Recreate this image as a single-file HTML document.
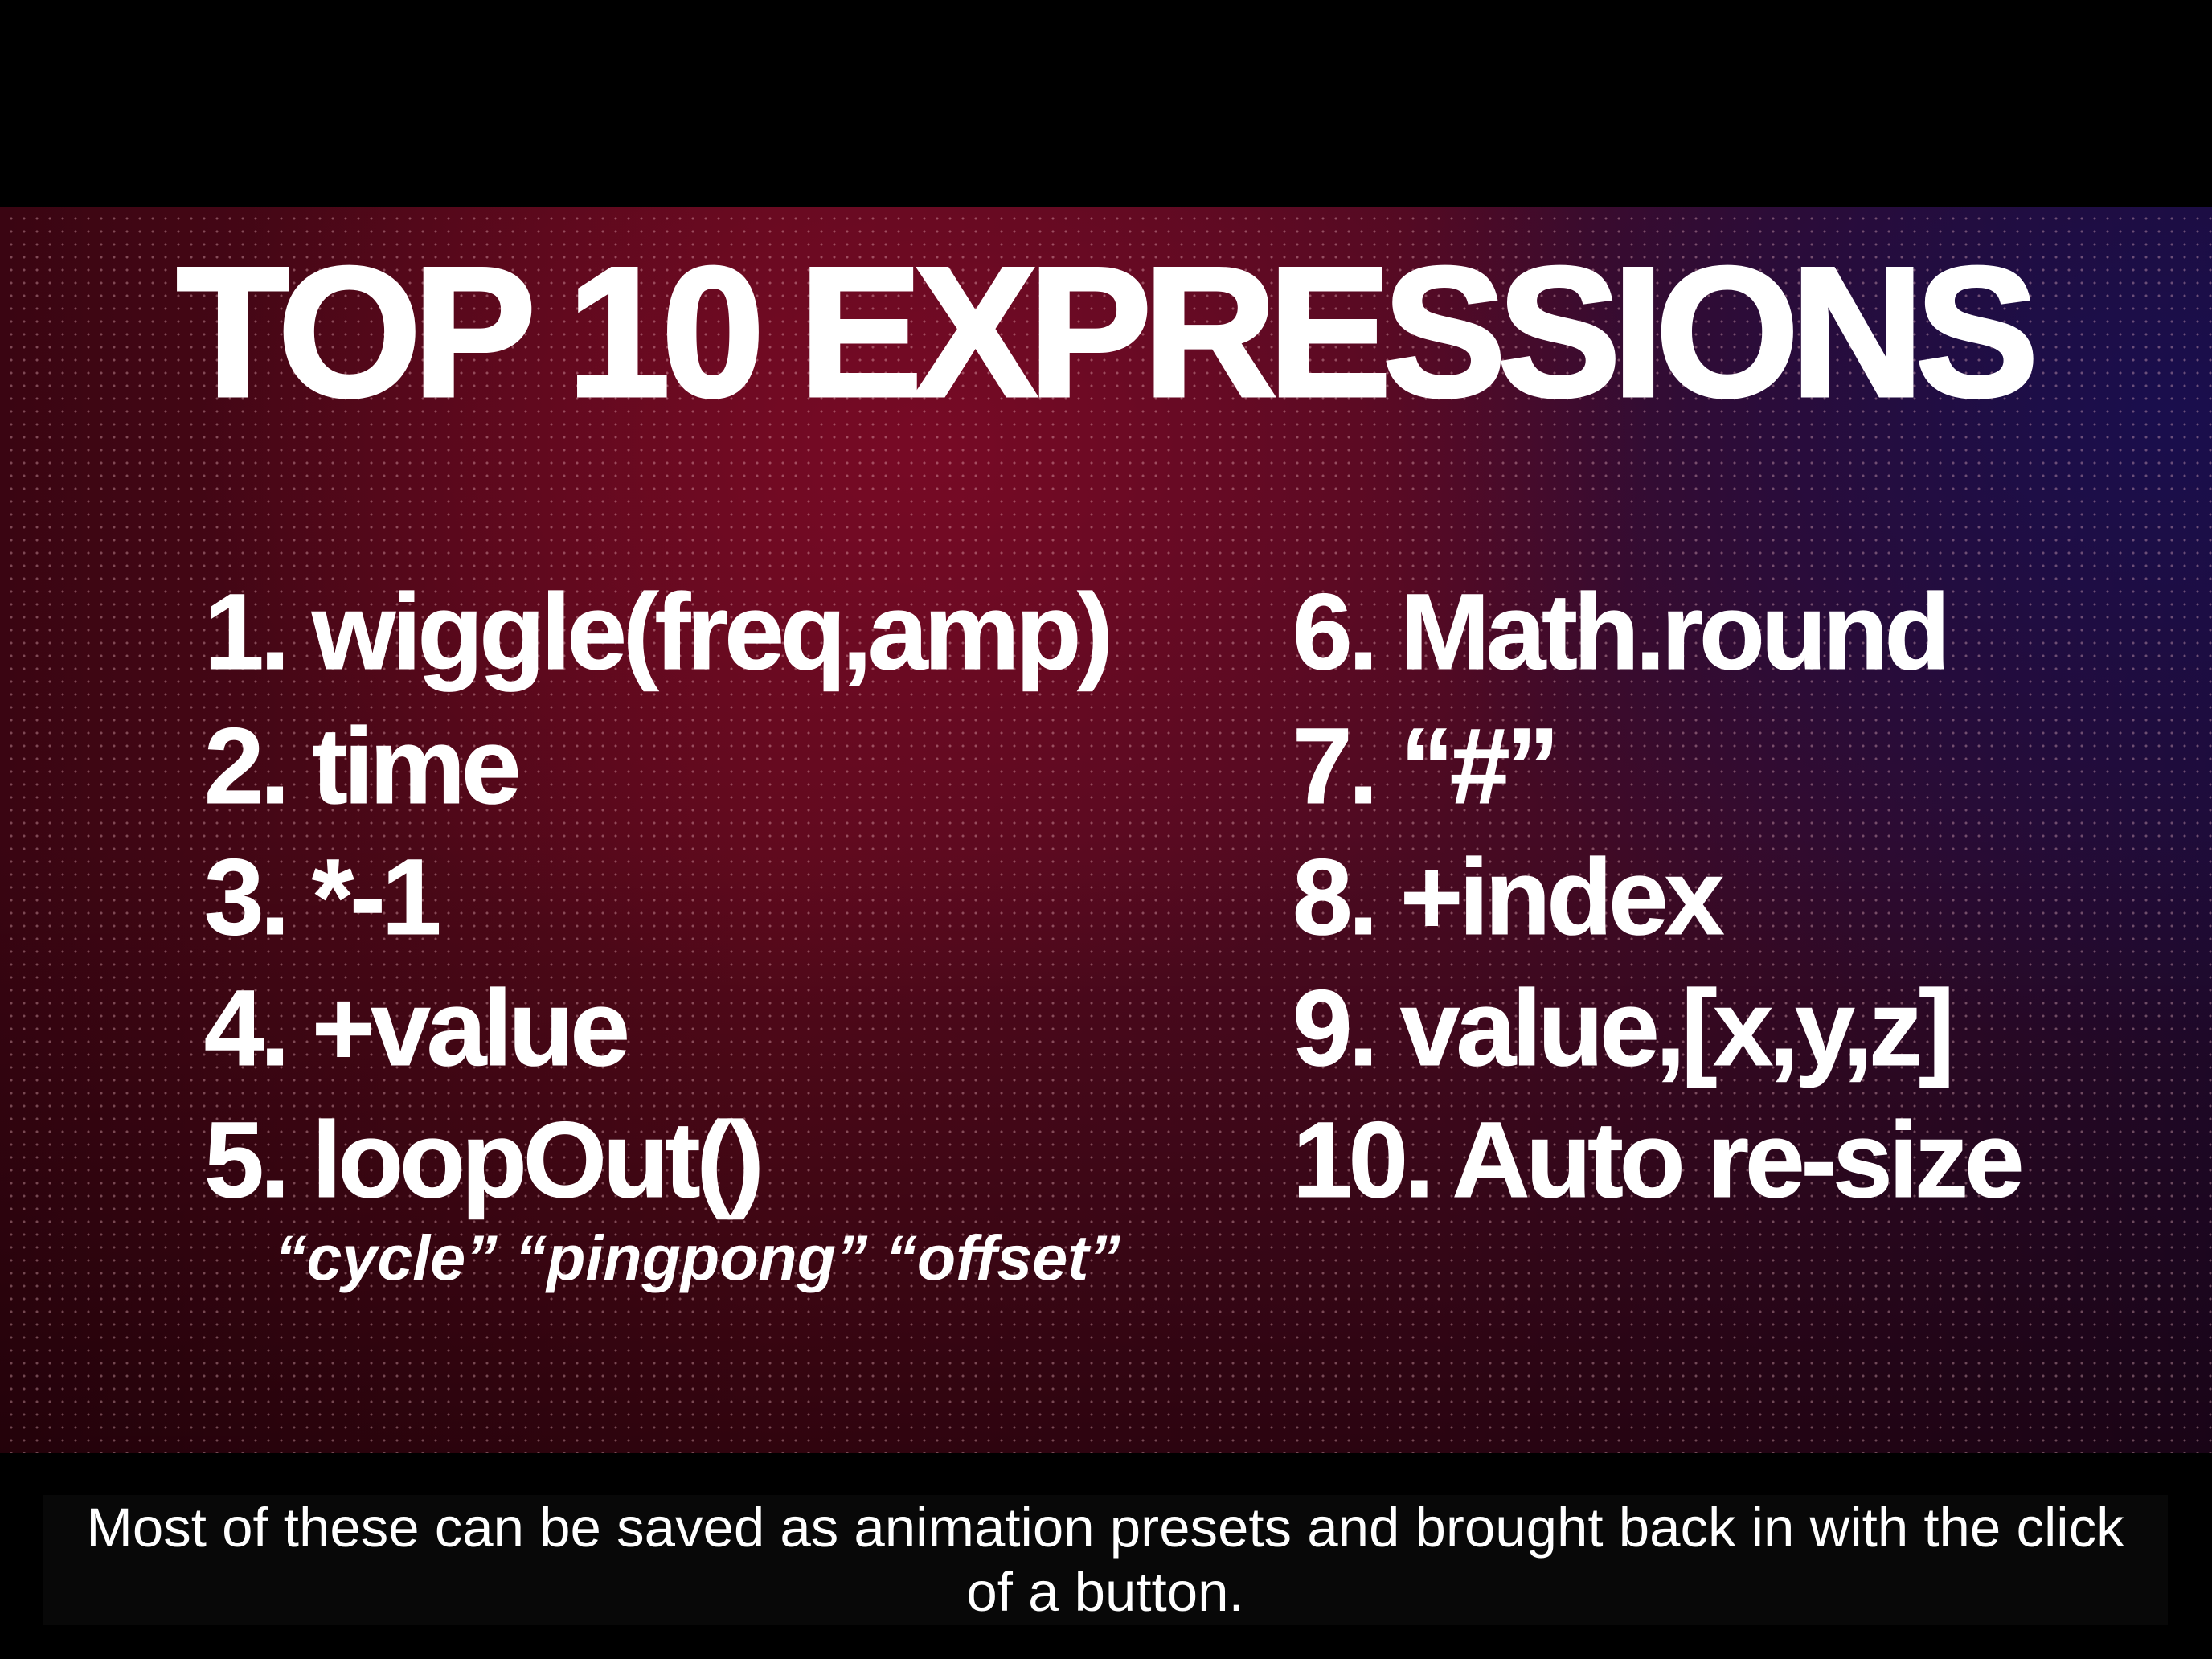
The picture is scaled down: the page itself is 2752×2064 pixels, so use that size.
<!DOCTYPE html>
<html><head><meta charset="utf-8"><style>
*{margin:0;padding:0;box-sizing:border-box}
body{width:2752px;height:2064px;background:#000;position:relative;overflow:hidden;font-family:"Liberation Sans",sans-serif;color:#fff}
#bg{position:absolute;left:0;top:258px;width:2752px;height:1550px;
background:
radial-gradient(ellipse 900px 700px at 1150px 300px,rgba(130,10,40,0.75),rgba(130,10,40,0) 100%),
radial-gradient(ellipse 1000px 800px at 2700px 250px,rgba(25,15,80,0.9),rgba(25,15,80,0) 100%),
linear-gradient(180deg,rgba(0,0,0,0) 50%,rgba(20,0,5,0.6) 100%),
linear-gradient(90deg,#3a0512 0%,#5a0a1c 35%,#4a0a22 65%,#200a30 100%);}
#dots{position:absolute;left:0;top:258px;width:2752px;height:1550px;
background-image:radial-gradient(circle,rgba(255,200,210,0.35) 1.3px,transparent 1.8px);background-size:16px 16px;background-position:6px 6px}
#strip{position:absolute;left:0;top:1808px;width:2752px;height:256px;background:#000}
.t{position:absolute;white-space:nowrap;font-weight:bold;line-height:1}
#title{left:220px;top:299px;font-size:229px;letter-spacing:-10px;font-weight:900;-webkit-text-stroke:5px #fff}
.it{font-size:134px;letter-spacing:-5px;-webkit-text-stroke:1px #fff}
#sub{left:342px;top:1525px;font-size:79px;font-style:italic;letter-spacing:0px}
#cap{position:absolute;left:53px;top:1860px;width:2644px;height:162px;background:#080808;text-align:center;font-size:69px;line-height:80px;padding-top:1px}
</style></head><body>
<div id="bg"></div><div id="dots"></div><div id="strip"></div>
<div class="t" id="title">TOP 10 EXPRESSIONS</div>
<div class="t it" style="left:254px;top:720px">1. wiggle(freq,amp)</div>
<div class="t it" style="left:254px;top:887px">2. time</div>
<div class="t it" style="left:254px;top:1050px">3. *-1</div>
<div class="t it" style="left:254px;top:1213px">4. +value</div>
<div class="t it" style="left:254px;top:1377px">5. loopOut()</div>
<div class="t" id="sub">“cycle” “pingpong” “offset”</div>
<div class="t it" style="left:1608px;top:720px">6. Math.round</div>
<div class="t it" style="left:1608px;top:887px">7. “#”</div>
<div class="t it" style="left:1608px;top:1050px">8. +index</div>
<div class="t it" style="left:1608px;top:1213px">9. value,[x,y,z]</div>
<div class="t it" style="left:1608px;top:1377px">10. Auto re-size</div>
<div id="cap">Most of these can be saved as animation presets and brought back in with the click<br>of a button.</div>
</body></html>
